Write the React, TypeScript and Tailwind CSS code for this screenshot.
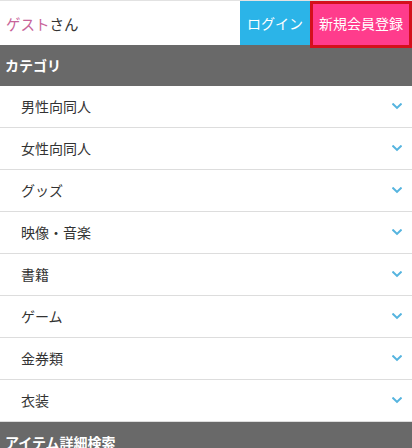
import React from "react";

const items = ["男性向同人", "女性向同人", "グッズ", "映像・音楽", "書籍", "ゲーム", "金券類", "衣装"];

function Chevron() {
  return (
    <svg width="10" height="7" viewBox="0 0 10 7" className="shrink-0">
      <path d="M1.2 1.3 L5 4.9 L8.8 1.3" fill="none" stroke="#55b4df" strokeWidth="2.1" strokeLinecap="square" />
    </svg>
  );
}

export default function App() {
  return (
    <div
      className="w-[412px] h-[448px] overflow-hidden bg-white"
      style={{ fontFamily: '"Noto Sans CJK JP", "Noto Sans", sans-serif' }}
    >
      <div className="h-[1px] bg-[#e2e2e2]" />
      <div className="relative z-10 flex h-[44px] items-stretch">
        <div className="flex flex-1 items-center pl-[6px] pt-[1px] text-[14.5px] text-[#333]">
          <span className="text-[#c8649a]">ゲスト</span>
          <span>さん</span>
        </div>
        <div className="flex w-[70px] items-center justify-center bg-[#2bb4e8] pt-[1px] text-[14px] text-white">
          ログイン
        </div>
        <div className="mb-[-3px] flex h-[47px] w-[102px] items-center justify-center border-[3px] border-[#d4101c] bg-[#ff3c8c] pb-[2px] text-[14px] text-white">
          新規会員登録
        </div>
      </div>
      <div className="flex h-[41px] items-center bg-[#696969] pl-[5px] text-[14px] font-bold text-white">
        カテゴリ
      </div>
      {items.map((t) => (
        <div
          key={t}
          className="flex h-[42px] items-center justify-between border-b border-[#dddddd] pl-[21px] pr-[10px] text-[14px] text-[#333]"
        >
          <span>{t}</span>
          <Chevron />
        </div>
      ))}
      <div className="flex h-[41px] items-center bg-[#696969] pl-[5px] text-[14px] font-bold text-white">
        アイテム詳細検索
      </div>
    </div>
  );
}
